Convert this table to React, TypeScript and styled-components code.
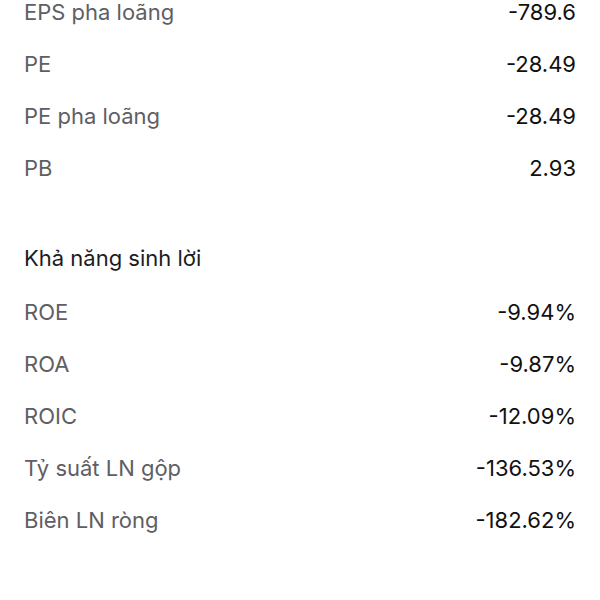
import React from "react";
import styled, { createGlobalStyle } from "styled-components";

const Global = createGlobalStyle`
  html, body { margin: 0; padding: 0; background: #ffffff; }
  body { font-family: Inter, "Noto Sans", "Liberation Sans", sans-serif; overflow: hidden; }
`;

const Page = styled.div`
  width: 600px;
  height: 600px;
  overflow: hidden;
  background: #ffffff;
`;

const List = styled.div`
  display: flex;
  flex-direction: column;
  margin-top: -14px;
  padding: 0 24px;
`;

const Section = styled.section<{ $gap?: number }>`
  display: flex;
  flex-direction: column;
  margin-top: ${(p) => p.$gap ?? 0}px;
`;

const Heading = styled.div`
  height: 54px;
  line-height: 52px;
  font-size: 22px;
  color: #1c1c1e;
`;

const Row = styled.div`
  display: flex;
  justify-content: space-between;
  align-items: center;
  height: 52px;
  line-height: 52px;
  font-size: 22px;
`;

const Label = styled.span`
  color: #5e5e63;
`;

const Value = styled.span`
  color: #111111;
`;

type Item = [string, string];

const valuation: Item[] = [
  ["EPS pha loãng", "-789.6"],
  ["PE", "-28.49"],
  ["PE pha loãng", "-28.49"],
  ["PB", "2.93"],
];

const profitability: Item[] = [
  ["ROE", "-9.94%"],
  ["ROA", "-9.87%"],
  ["ROIC", "-12.09%"],
  ["Tỷ suất LN gộp", "-136.53%"],
  ["Biên LN ròng", "-182.62%"],
];

export default function App() {
  return (
    <Page>
      <Global />
      <List>
        <Section>
          {valuation.map(([l, v]) => (
            <Row key={l}>
              <Label>{l}</Label>
              <Value>{v}</Value>
            </Row>
          ))}
        </Section>
        <Section $gap={38}>
          <Heading>Khả năng sinh lời</Heading>
          {profitability.map(([l, v]) => (
            <Row key={l}>
              <Label>{l}</Label>
              <Value>{v}</Value>
            </Row>
          ))}
        </Section>
      </List>
    </Page>
  );
}
